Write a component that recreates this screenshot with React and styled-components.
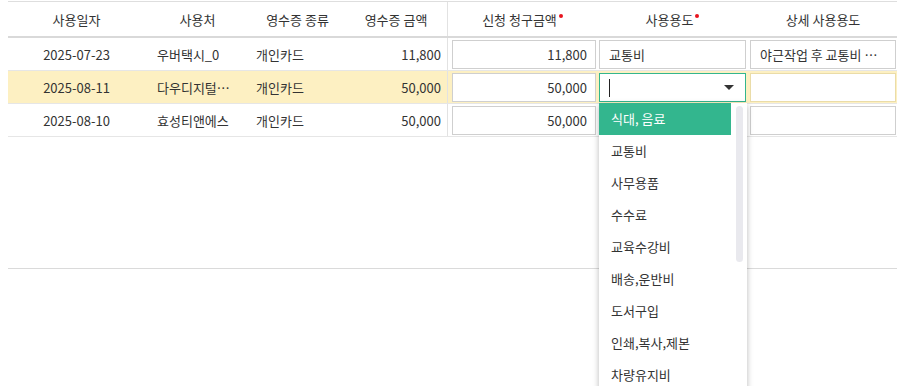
import styled, { createGlobalStyle } from "styled-components";

const GlobalStyle = createGlobalStyle`
  html, body {
    margin: 0;
    padding: 0;
    background: #fff;
    overflow: hidden;
  }
  body {
    font-family: "Noto Sans CJK KR", "Noto Sans", sans-serif;
    font-size: 13px;
    color: #333;
  }
`;

const COLS = "137px 105px 95px 103px 149px 151px 150px";

const rows = [
  { date: "2025-07-23", place: "우버택시_0", kind: "개인카드", amount: "11,800", claim: "11,800", use: "교통비", detail: "야근작업 후 교통비 야간" },
  { date: "2025-08-11", place: "다우디지털서비스", kind: "개인카드", amount: "50,000", claim: "50,000", use: "", detail: "", active: true },
  { date: "2025-08-10", place: "효성티앤에스", kind: "개인카드", amount: "50,000", claim: "50,000", use: "", detail: "" },
];

const options = [
  "식대, 음료", "교통비", "사무용품", "수수료", "교육수강비", "배송,운반비", "도서구입",
  "인쇄,복사,제본", "차량유지비", "통신비", "회의비", "접대비", "경조사비", "소모품비",
  "출장비", "주차비", "유류비", "복리후생비", "광고선전비", "기타",
];

const Page = styled.div`
  height: 100vh;
  overflow: hidden;
  padding: 1px 0 0 8px;
  box-sizing: border-box;
`;

const Table = styled.div`
  width: 889px;
  border-top: 1px solid #dedede;
`;

const Row = styled.div`
  display: grid;
  grid-template-columns: ${COLS};
  height: ${(p) => (p.$head ? "34px" : "32px")};
  border-bottom: ${(p) => (p.$head ? "2px solid #d9d9d9" : "1px solid #e6e6e6")};
  background: ${(p) => (p.$active ? "#fdf0c2" : "transparent")};
`;

const Cell = styled.div`
  position: relative;
  display: flex;
  align-items: center;
  justify-content: ${(p) => p.$align || "flex-start"};
  padding: 0 ${(p) => (p.$pad ?? 6)}px;
  min-width: 0;
  box-sizing: border-box;
  border-right: ${(p) => (p.$divider ? "1px solid #e2e2e2" : "none")};
  white-space: nowrap;
`;

const HeadCell = styled(Cell)`
  justify-content: center;
  color: #333;
`;

const Ellipsis = styled.span`
  overflow: hidden;
  text-overflow: ellipsis;
  white-space: nowrap;
`;

const Required = styled.span`
  display: inline-block;
  width: 4px;
  height: 4px;
  border-radius: 50%;
  background: #e8141e;
  margin-left: 2px;
  align-self: flex-start;
  margin-top: 12px;
`;

const Body = styled.div`
  height: 230px;
  border-bottom: 1px solid #dadada;
`;

const InputCell = styled.div`
  position: relative;
  padding: 2px ${(p) => (p.$first ? "1px" : "2px")} 1px ${(p) => (p.$first ? "4px" : "2px")};
  box-sizing: border-box;
  display: flex;
`;

const Input = styled.div`
  flex: 1;
  display: flex;
  align-items: center;
  justify-content: ${(p) => (p.$right ? "flex-end" : "flex-start")};
  min-width: 0;
  padding: 0 ${(p) => (p.$right ? "8px" : "9px")};
  background: #fff;
  border: 1px solid ${(p) => (p.$focus ? "#33b68e" : p.$tint ? "#eadca8" : "#cfcfcf")};
  box-sizing: border-box;
  color: #333;
`;

const Caret = styled.span`
  width: 1px;
  height: 18px;
  background: #222;
`;

const Arrow = styled.span`
  margin-left: auto;
  margin-right: 2px;
  width: 0;
  height: 0;
  border-left: 5px solid transparent;
  border-right: 5px solid transparent;
  border-top: 5px solid #333;
`;

const Dropdown = styled.div`
  position: absolute;
  top: 100%;
  left: 2px;
  width: 148px;
  height: 320px;
  background: #fff;
  box-shadow: 0 2px 6px rgba(0, 0, 0, 0.28);
  overflow: hidden;
  z-index: 10;
`;

const OptionList = styled.ul`
  margin: 0 16px 0 0;
  padding: 0;
  list-style: none;
`;

const Option = styled.li`
  height: 32px;
  line-height: 32px;
  padding: 0 12px;
  background: ${(p) => (p.$selected ? "#33b68e" : "#fff")};
  color: ${(p) => (p.$selected ? "#fff" : "#333")};
`;

const ScrollThumb = styled.div`
  position: absolute;
  top: 3px;
  right: 4px;
  width: 7px;
  height: 156px;
  border-radius: 4px;
  background: #e9e9ee;
`;

export default function App() {
  return (
    <Page>
      <GlobalStyle />
      <Table>
        <Row $head>
          <HeadCell>사용일자</HeadCell>
          <HeadCell>사용처</HeadCell>
          <HeadCell>영수증 종류</HeadCell>
          <HeadCell $divider>영수증 금액</HeadCell>
          <HeadCell>
            신청 청구금액<Required />
          </HeadCell>
          <HeadCell>
            사용용도<Required />
          </HeadCell>
          <HeadCell>상세 사용용도</HeadCell>
        </Row>
        <Body>
          {rows.map((r) => (
            <Row key={r.date} $active={r.active}>
              <Cell $align="center">{r.date}</Cell>
              <Cell $pad={12}>
                <Ellipsis>{r.place}</Ellipsis>
              </Cell>
              <Cell $pad={6}>{r.kind}</Cell>
              <Cell $align="flex-end" $divider>
                {r.amount}
              </Cell>
              <InputCell $first>
                <Input $right>{r.claim}</Input>
              </InputCell>
              <InputCell>
                {r.active ? (
                  <>
                    <Input $focus>
                      <Caret />
                      <Arrow />
                    </Input>
                    <Dropdown>
                      <OptionList>
                        {options.map((o, i) => (
                          <Option key={o} $selected={i === 0}>
                            {o}
                          </Option>
                        ))}
                      </OptionList>
                      <ScrollThumb />
                    </Dropdown>
                  </>
                ) : (
                  <Input>{r.use}</Input>
                )}
              </InputCell>
              <InputCell>
                <Input $tint={r.active}>
                  <Ellipsis>{r.detail}</Ellipsis>
                </Input>
              </InputCell>
            </Row>
          ))}
        </Body>
      </Table>
    </Page>
  );
}
